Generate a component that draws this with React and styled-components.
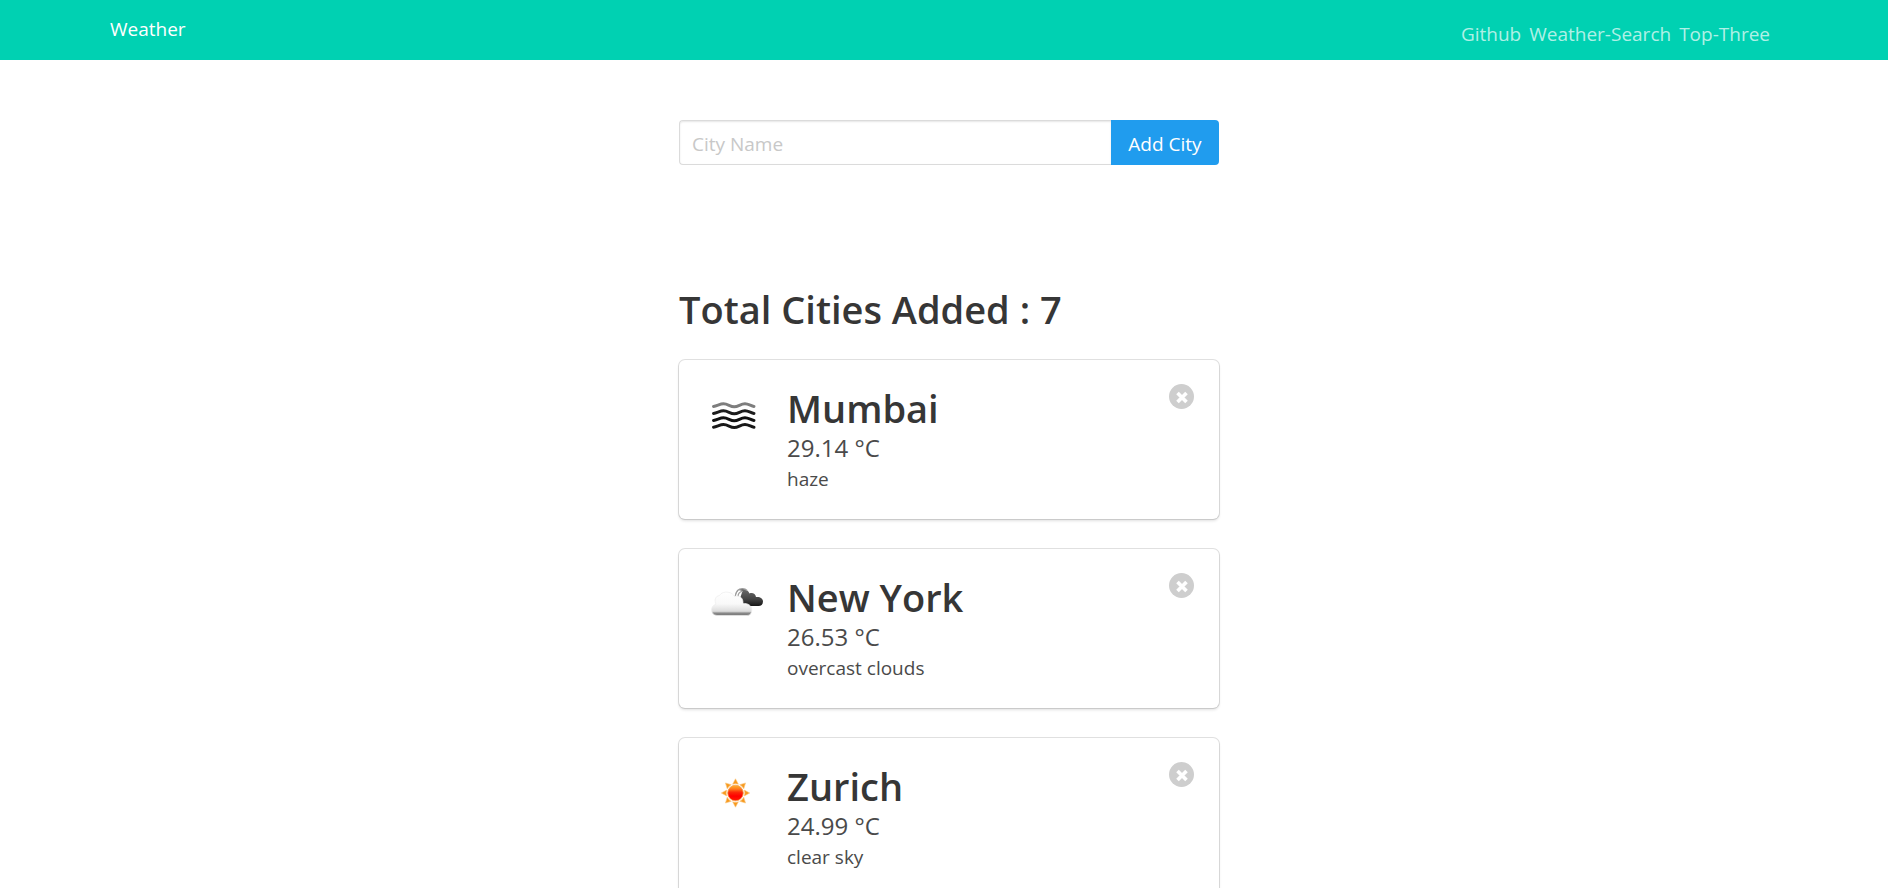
import React from "react";
import styled, { createGlobalStyle } from "styled-components";

const GlobalStyle = createGlobalStyle`
  *, *::before, *::after { box-sizing: border-box; }
  html { background: #fff; }
  body {
    margin: 0;
    font-family: "Segoe UI", "Open Sans", "Noto Sans", sans-serif;
    font-size: 19px;
    line-height: 30px;
    color: #4a4a4a;
  }
  h1, h2, p { margin: 0; }
`;

const Navbar = styled.header`
  background: #00d1b2;
`;

const Container = styled.div`
  max-width: 1680px;
  margin: 0 auto;
`;

const NavContent = styled(Container)`
  display: flex;
  justify-content: space-between;
  align-items: flex-start;
  height: 60px;
  padding: 14px 14px 0 6px;
`;

const Brand = styled.a`
  color: #fff;
  text-decoration: none;
`;

const NavLinks = styled.nav`
  display: flex;
  gap: 8px;
  padding-top: 5px;
`;

const NavLink = styled.a`
  color: rgba(255, 255, 255, 0.7);
  text-decoration: none;
`;

const Main = styled(Container)`
  padding: 60px 0 60px 10px;
`;

const Column = styled.div`
  width: 100%;
  max-width: 540px;
  margin: 0 auto;
`;

const SearchForm = styled.form`
  display: flex;
  height: 45px;
  margin-bottom: 115px;
`;

const CityInput = styled.input`
  flex: 1;
  min-width: 0;
  padding: 3px 12px 0;
  border: 1px solid #dbdbdb;
  border-right: 0;
  border-radius: 4px 0 0 4px;
  box-shadow: inset 0 1px 2px rgba(10, 10, 10, 0.1);
  background: #fff;
  color: #363636;
  font: inherit;
  outline: none;

  &::placeholder {
    color: #c8c8c8;
    opacity: 1;
  }
`;

const AddButton = styled.button`
  width: 108px;
  padding: 3px 0 0;
  border: 0;
  border-radius: 0 4px 4px 0;
  background: #209cee;
  color: #fff;
  font: inherit;
  cursor: pointer;
`;

const Total = styled.h1`
  margin-bottom: 22px;
  color: #363636;
  font-size: 38px;
  font-weight: 600;
  line-height: 58px;
`;

const CityCard = styled.article`
  display: flex;
  align-items: flex-start;
  margin-bottom: 30px;
  padding: 24px 25px 25px;
  border-radius: 6px;
  background: #fff;
  box-shadow: 0 2px 3px rgba(10, 10, 10, 0.12), 0 0 0 1px rgba(10, 10, 10, 0.12);
`;

const WeatherIcon = styled.svg`
  flex: none;
  width: 62px;
  height: 62px;
  margin-right: 21px;
`;

const CityInfo = styled.div`
  flex: 1;
  min-width: 0;
`;

const CityName = styled.h2`
  color: #363636;
  font-size: 38px;
  font-weight: 600;
  line-height: 48px;
`;

const Temperature = styled.p`
  font-size: 24px;
  line-height: 32px;
`;

const Description = styled.p`
  line-height: 30px;
`;

const RemoveButton = styled.button`
  flex: none;
  width: 25px;
  height: 25px;
  padding: 0;
  border: 0;
  border-radius: 50%;
  background: #cecece;
  cursor: pointer;

  svg {
    display: block;
  }
`;

const hazeWaves = [
  { y: 21.2, color: "#7d7d7d" },
  { y: 28.2, color: "#1c1c1c" },
  { y: 35.2, color: "#101010" },
  { y: 42, color: "#181818" },
];

function HazeIcon() {
  return (
    <WeatherIcon viewBox="0 0 62 62" role="img" aria-label="haze">
      <g fill="none" strokeWidth="3" strokeLinecap="round">
        {hazeWaves.map(({ y, color }) => (
          <path
            key={y}
            transform={`translate(0 ${y})`}
            d="M9.500 1.200C13 .8 16 -1.400 19.500 -1.400C24 -1.400 26 1.500 30.200 1.500C34.400 1.500 36.500 -1.400 41 -1.400C44.500 -1.400 47 .8 50 1.200"
            stroke={color}
          />
        ))}
      </g>
    </WeatherIcon>
  );
}

function CloudsIcon() {
  return (
    <WeatherIcon viewBox="0 0 62 62" role="img" aria-label="overcast clouds">
      <defs>
        <linearGradient id="frontCloud" x1="0" y1="0" x2="0" y2="1">
          <stop offset="0" stopColor="#ffffff" />
          <stop offset="0.5" stopColor="#f9f9f9" />
          <stop offset="0.82" stopColor="#dcdcdc" />
          <stop offset="0.9" stopColor="#8a8a8a" />
          <stop offset="1" stopColor="#777777" />
        </linearGradient>
        <linearGradient id="backCloud" x1="0" y1="0" x2="0" y2="1">
          <stop offset="0" stopColor="#6c6c6c" />
          <stop offset="0.6" stopColor="#444444" />
          <stop offset="1" stopColor="#161616" />
        </linearGradient>
      </defs>
      <path
        d="M31.500 23C32 18 35 16 38 15.800C42 15.600 44.500 18 45.500 20.500C48.500 19.200 51.500 21 52 24C56 23.500 59 25.500 59 28.500C59 31.500 57 33 54.500 33H42C38 32 35 27 31.500 23Z"
        fill="url(#backCloud)"
      />
      <path
        d="M30 24L34.500 17L38.500 18L35.500 27Z"
        fill="#ffffff"
      />
      <path d="M31.200 23.500C31.800 18.500 34.600 15.600 38.500 15.600C40.500 15.600 42 16.300 43 17.500M34 24C34 20.500 36 18.500 39 18.400" fill="none" stroke="#9c9c9c" strokeWidth="1.200" />
      <path
        d="M13 42.500C9.500 42.300 7.600 40 7.600 36.800C7.600 34 9.500 32 12 31.200C10.500 27.500 10.500 23.500 15.500 22.500C17 19.500 21 18.800 24 19.200C27.300 19.600 29.500 21.400 30.500 23.500C35.500 22 39.500 25 39 30.500C44 30 47.800 32.500 47.800 37C47.800 40.500 46 42.500 43 42.500Z"
        fill="url(#frontCloud)"
        stroke="#ececec"
        strokeWidth="0.700"
      />
    </WeatherIcon>
  );
}

function SunIcon() {
  return (
    <WeatherIcon viewBox="0 0 62 62" role="img" aria-label="clear sky">
      <defs>
        <linearGradient id="sunCore" x1="0" y1="0" x2="0" y2="1">
          <stop offset="0" stopColor="#ffb52e" />
          <stop offset="0.250" stopColor="#ff7a1c" />
          <stop offset="0.450" stopColor="#fb2a08" />
          <stop offset="0.700" stopColor="#ff0000" />
          <stop offset="1" stopColor="#ff1c00" />
        </linearGradient>
      </defs>
      <g transform="translate(31.500 31)">
        {[0, 45, 90, 135, 180, 225, 270, 315].map((angle) => (
          <path
            key={angle}
            d="M0 -14.200L2.900 -8.800Q0 -9.800 -2.900 -8.800Z"
            transform={`rotate(${angle})`}
            fill="#f79a1e"
            stroke="#fbc783"
            strokeWidth="0.600"
          />
        ))}
        <circle r="7.800" fill="url(#sunCore)" stroke="#f6a04a" strokeWidth="0.800" />
      </g>
    </WeatherIcon>
  );
}

const cities = [
  { name: "Mumbai", temperature: "29.14", description: "haze", Icon: HazeIcon },
  { name: "New York", temperature: "26.53", description: "overcast clouds", Icon: CloudsIcon },
  { name: "Zurich", temperature: "24.99", description: "clear sky", Icon: SunIcon },
];

const totalCities = 7;

function City({ name, temperature, description, Icon }) {
  return (
    <CityCard>
      <Icon />
      <CityInfo>
        <CityName>{name}</CityName>
        <Temperature>{`${temperature} °C`}</Temperature>
        <Description>{description}</Description>
      </CityInfo>
      <RemoveButton type="button" aria-label={`Remove ${name}`}>
        <svg width="25" height="25" viewBox="0 0 25 25" aria-hidden="true">
          <path d="M8.500 9L17.500 18M17.500 9L8.500 18" stroke="#fff" strokeWidth="3.600" />
        </svg>
      </RemoveButton>
    </CityCard>
  );
}

export default function App() {
  return (
    <>
      <GlobalStyle />
      <Navbar>
        <NavContent>
          <Brand href="#">Weather</Brand>
          <NavLinks>
            <NavLink href="#github">Github</NavLink>
            <NavLink href="#search">Weather-Search</NavLink>
            <NavLink href="#top-three">Top-Three</NavLink>
          </NavLinks>
        </NavContent>
      </Navbar>
      <Main as="main">
        <Column>
          <SearchForm onSubmit={(event) => event.preventDefault()}>
            <CityInput type="text" placeholder="City Name" aria-label="City Name" />
            <AddButton type="submit">Add City</AddButton>
          </SearchForm>
          <Total>Total Cities Added : {totalCities}</Total>
          {cities.map((city) => (
            <City key={city.name} {...city} />
          ))}
        </Column>
      </Main>
    </>
  );
}
